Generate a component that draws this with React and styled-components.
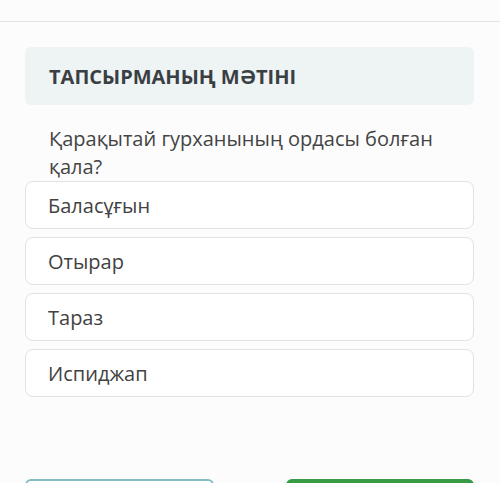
import React from "react";
import styled, { createGlobalStyle } from "styled-components";

const Global = createGlobalStyle`
  html, body { margin: 0; padding: 0; background: #fcfcfc; }
  body { font-family: "Open Sans", "Noto Sans", sans-serif; color: #444; }
`;

const TopBar = styled.div`
  height: 21px;
  border-bottom: 1px solid #e3e3e3;
`;

const Main = styled.main`
  width: 449px;
  margin-left: 25px;
  display: flex;
  flex-direction: column;
`;

const TaskHeader = styled.h2`
  margin: 25px 0 0;
  height: 58px;
  display: flex;
  align-items: center;
  padding-left: 24px;
  background: #eef3f4;
  border-radius: 6px;
  font-size: 20px;
  font-weight: 700;
  color: #3a3f44;
`;

const Question = styled.p`
  margin: 20px 0 0;
  padding: 0 24px;
  font-size: 20px;
  line-height: 28px;
  color: #444;
`;

const Options = styled.div`
  display: flex;
  flex-direction: column;
  gap: 8px;
`;

const Option = styled.button`
  box-sizing: border-box;
  height: 48px;
  display: flex;
  align-items: center;
  padding: 0 0 0 22px;
  background: #fff;
  border: 1.5px solid #e2e2e2;
  border-radius: 8px;
  font-family: inherit;
  font-size: 20px;
  color: #424242;
  text-align: left;
`;

const Actions = styled.div`
  margin-top: 82px;
  display: flex;
  justify-content: space-between;
`;

const ActionButton = styled.button`
  box-sizing: border-box;
  width: ${(p) => (p.$primary ? "188px" : "189px")};
  height: 44px;
  border-radius: 6px;
  border: 2px solid ${(p) => (p.$primary ? "#3a9b47" : "#82bdbf")};
  background: ${(p) => (p.$primary ? "#3a9b47" : "#fff")};
`;

const answers = ["Баласұғын", "Отырар", "Тараз", "Испиджап"];

export default function App() {
  return (
    <>
      <Global />
      <TopBar />
      <Main>
        <TaskHeader>ТАПСЫРМАНЫҢ МӘТІНІ</TaskHeader>
        <Question>Қарақытай гурханының ордасы болған қала?</Question>
        <Options>
          {answers.map((a) => (
            <Option key={a}>{a}</Option>
          ))}
        </Options>
        <Actions>
          <ActionButton />
          <ActionButton $primary />
        </Actions>
      </Main>
    </>
  );
}
